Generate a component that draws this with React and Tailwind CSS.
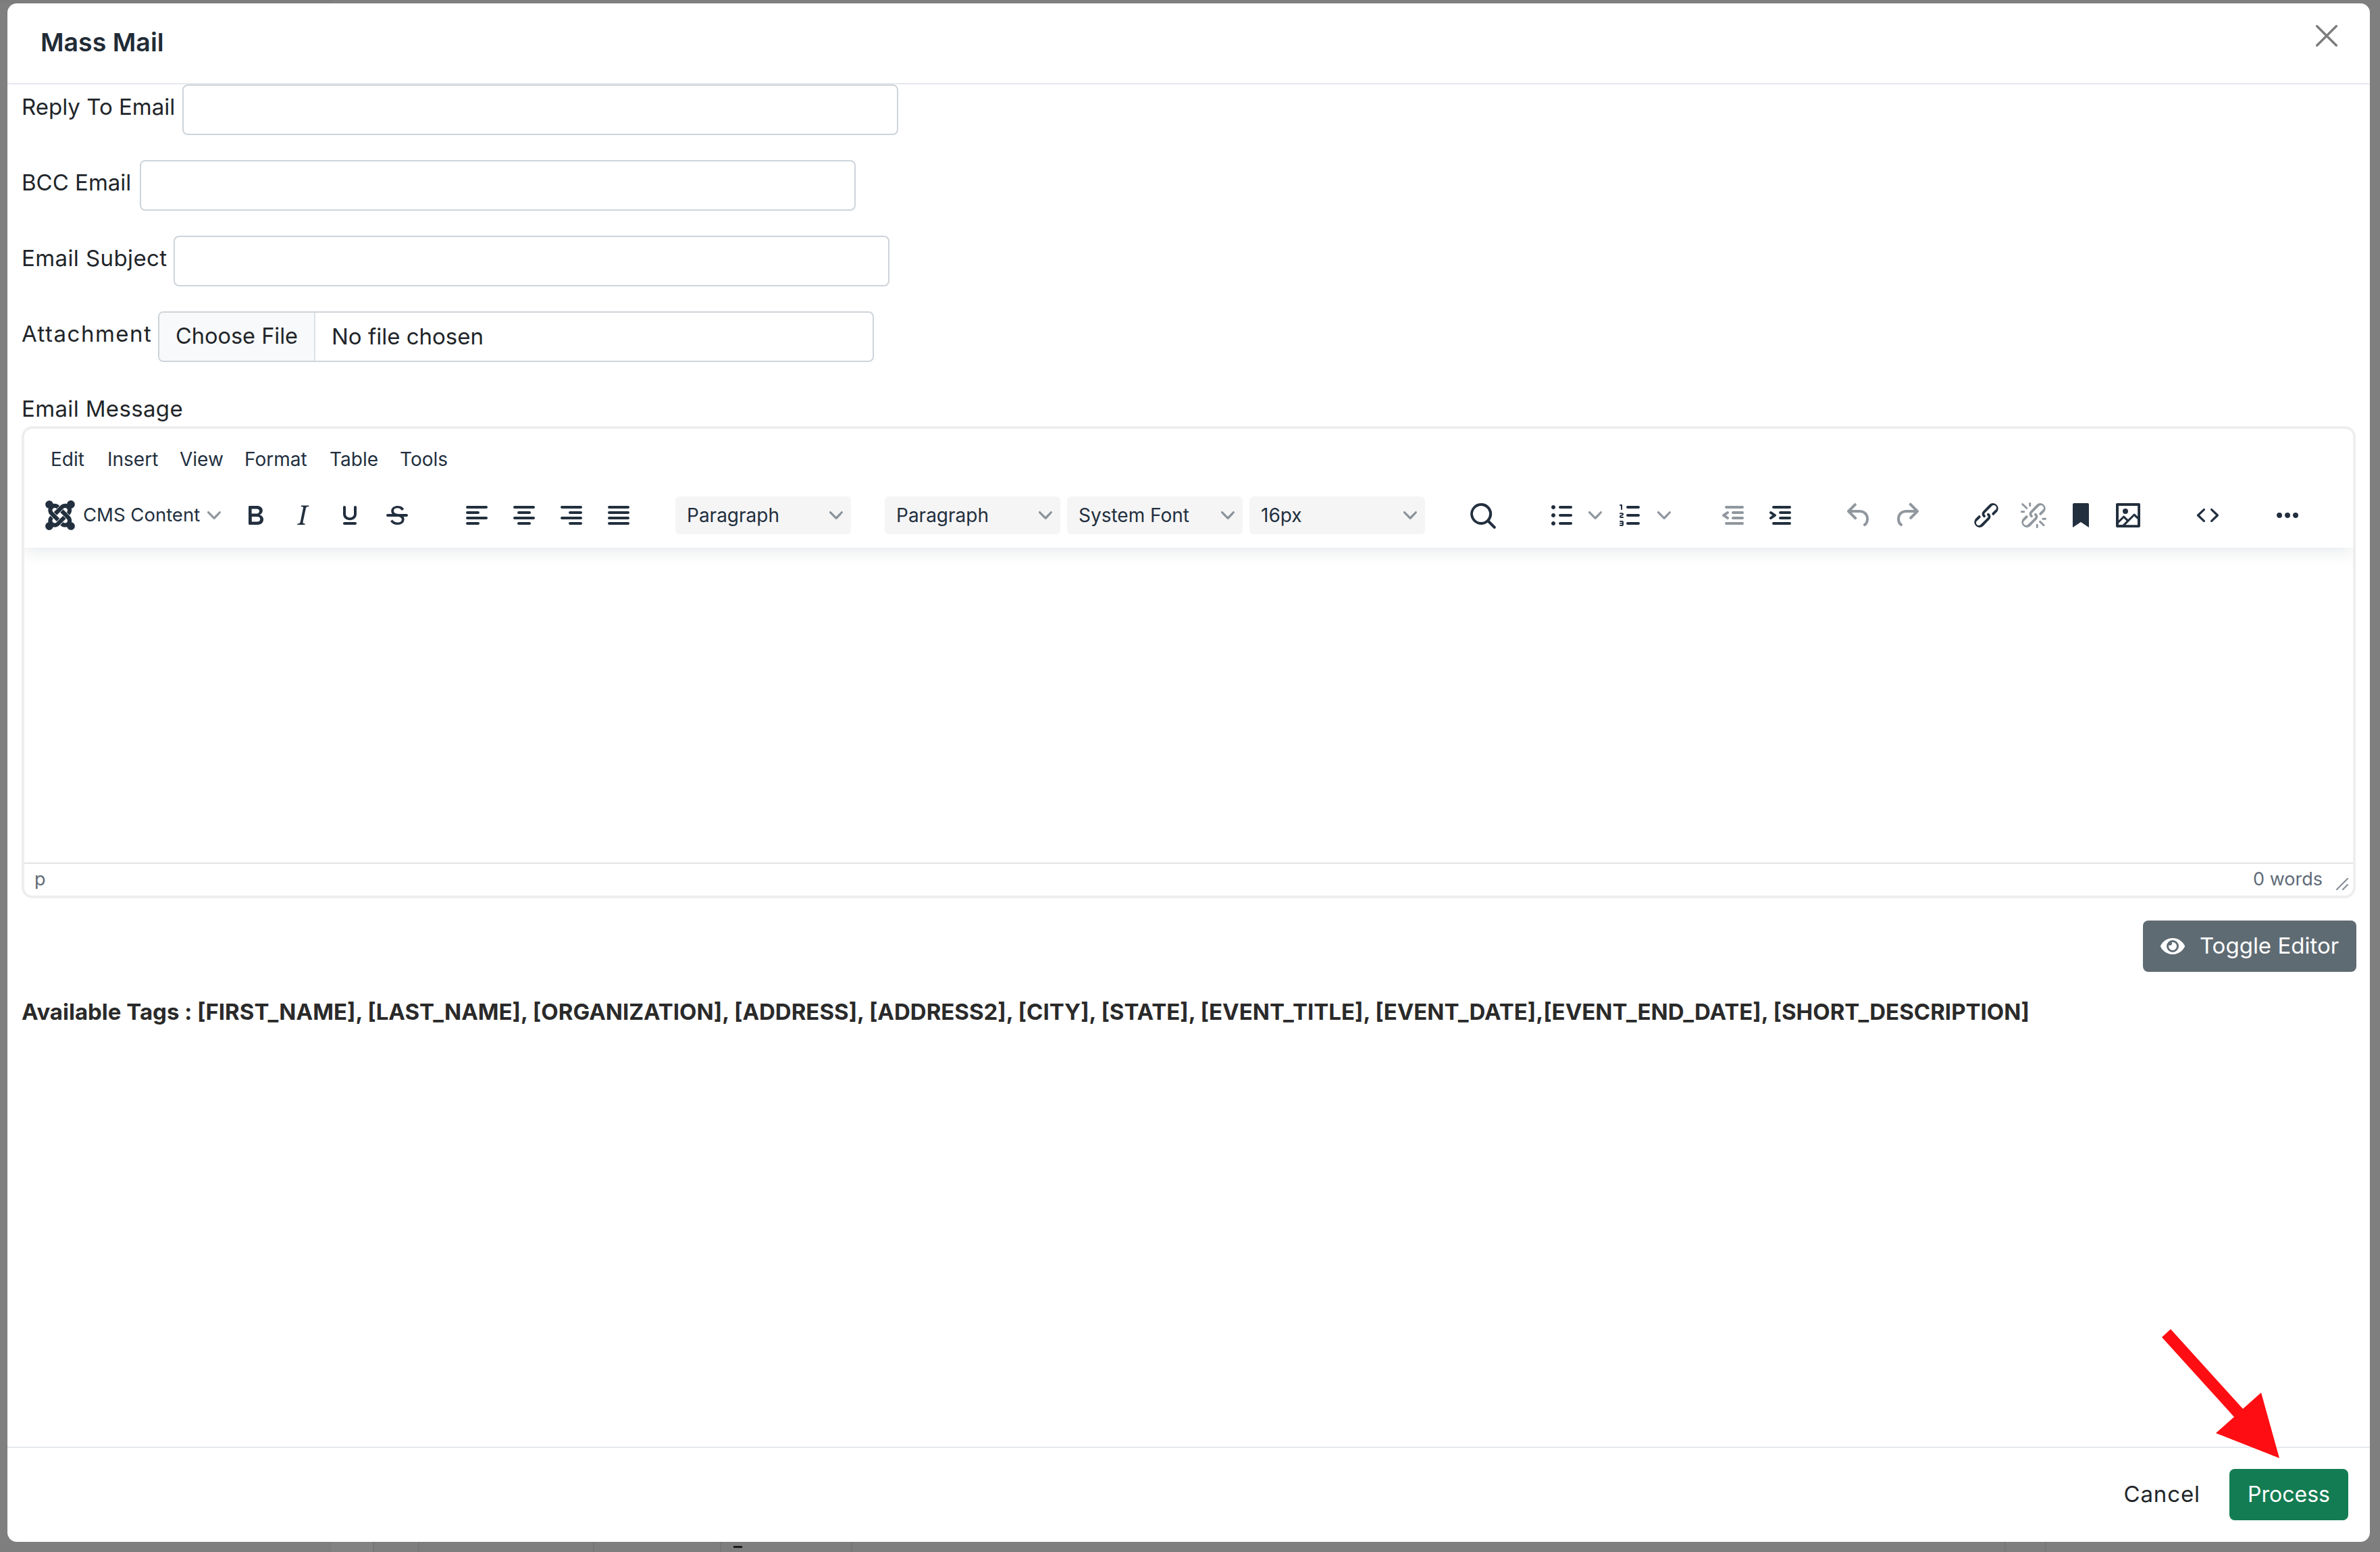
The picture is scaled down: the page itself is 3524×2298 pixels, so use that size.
import React from "react";
import { FaJoomla, FaEye } from "react-icons/fa";

const P = {
  bold: "M7.8 19c-.3 0-.5 0-.6-.2l-.2-.5V5.7c0-.2 0-.4.2-.5l.6-.2h5c1.5 0 2.7.3 3.5 1 .7.6 1.1 1.4 1.1 2.5a3 3 0 0 1-.6 1.9c-.4.6-1 1-1.6 1.2.4.1.9.3 1.3.6s.8.7 1 1.2c.4.4.5 1 .5 1.6 0 1.3-.4 2.3-1.3 3-.8.7-2.1 1-3.8 1H7.8zm5-8.3c.6 0 1.2-.1 1.6-.5.4-.3.6-.7.6-1.3 0-1.1-.8-1.7-2.3-1.7H9.3v3.5h3.4zm.5 6c.7 0 1.3-.1 1.7-.4.4-.4.6-.9.6-1.5s-.2-1-.7-1.4c-.4-.3-1-.4-2-.4H9.4v3.8h4z",
  italic: "M16.7 4.7l-.1.9h-.3c-.6 0-1 0-1.4.3-.3.3-.4.6-.5 1.1l-2.1 9.8v.6c0 .5.4.8 1.4.8h.2l-.2.8H8l.2-.8h.2c1.1 0 1.8-.5 2-1.5l2-9.8.1-.5c0-.6-.4-.8-1.4-.8h-.3l.2-.9h5.8z",
  underline: "M16 5c.6 0 1 .4 1 1v5c0 2.8-2.2 4.6-5 4.6S7 13.8 7 11V6c0-.6.4-1 1-1s1 .4 1 1v5c0 1.7 1.3 2.7 3 2.7s3-1 3-2.7V6c0-.6.4-1 1-1zM8 17h8c.6 0 1 .4 1 1s-.4 1-1 1H8c-.6 0-1-.4-1-1s.4-1 1-1z",
  strike: "M15.6 8.5c-.5-.7-1-1.1-1.3-1.3-.6-.4-1.3-.6-2-.6-2.7 0-2.8 1.7-2.8 2.1 0 1.6 1.8 2 3.2 2.3 4.4.9 4.6 2.8 4.6 3.9 0 1.4-.7 4.1-5 4.1A6.2 6.2 0 0 1 7 16.4l1.5-1.1c.4.6 1.6 2 3.7 2 1.6 0 2.5-.4 3-1.2.4-.8.3-2-.8-2.6-.7-.4-1.6-.7-2.9-1-1-.2-3.9-.8-3.9-3.6C7.6 6 10.3 5 12.4 5c2.9 0 4.2 1.6 4.7 2.4l-1.5 1.1zM5 11h14a1 1 0 0 1 0 2H5a1 1 0 0 1 0-2z",
  alignLeft: "M5 5h14c.6 0 1 .4 1 1s-.4 1-1 1H5a1 1 0 1 1 0-2zm0 4h8c.6 0 1 .4 1 1s-.4 1-1 1H5a1 1 0 1 1 0-2zm0 8h8c.6 0 1 .4 1 1s-.4 1-1 1H5a1 1 0 0 1 0-2zm0-4h14c.6 0 1 .4 1 1s-.4 1-1 1H5a1 1 0 0 1 0-2z",
  alignCenter: "M5 5h14c.6 0 1 .4 1 1s-.4 1-1 1H5a1 1 0 1 1 0-2zm3 4h8c.6 0 1 .4 1 1s-.4 1-1 1H8a1 1 0 1 1 0-2zm0 8h8c.6 0 1 .4 1 1s-.4 1-1 1H8a1 1 0 0 1 0-2zm-3-4h14c.6 0 1 .4 1 1s-.4 1-1 1H5a1 1 0 0 1 0-2z",
  alignRight: "M5 5h14c.6 0 1 .4 1 1s-.4 1-1 1H5a1 1 0 1 1 0-2zm6 4h8c.6 0 1 .4 1 1s-.4 1-1 1h-8a1 1 0 0 1 0-2zm0 8h8c.6 0 1 .4 1 1s-.4 1-1 1h-8a1 1 0 0 1 0-2zm-6-4h14c.6 0 1 .4 1 1s-.4 1-1 1H5a1 1 0 0 1 0-2z",
  justify: "M5 5h14c.6 0 1 .4 1 1s-.4 1-1 1H5a1 1 0 1 1 0-2zm0 4h14c.6 0 1 .4 1 1s-.4 1-1 1H5a1 1 0 1 1 0-2zm0 4h14c.6 0 1 .4 1 1s-.4 1-1 1H5a1 1 0 0 1 0-2zm0 4h14c.6 0 1 .4 1 1s-.4 1-1 1H5a1 1 0 0 1 0-2z",
  search: "M16 17.3a8 8 0 1 1 1.4-1.4l4.3 4.4a1 1 0 0 1-1.4 1.4l-4.4-4.3zm-5-.3a6 6 0 1 0 0-12 6 6 0 0 0 0 12z",
  bullist: "M11 5h8c.6 0 1 .4 1 1s-.4 1-1 1h-8a1 1 0 0 1 0-2zm0 6h8c.6 0 1 .4 1 1s-.4 1-1 1h-8a1 1 0 0 1 0-2zm0 6h8c.6 0 1 .4 1 1s-.4 1-1 1h-8a1 1 0 0 1 0-2zM4.5 6c0-.4.1-.8.4-1 .3-.4.7-.5 1.1-.5s.8.1 1 .4c.4.3.5.7.5 1.1s-.1.8-.4 1c-.3.4-.7.5-1.1.5s-.8-.1-1-.4c-.4-.3-.5-.7-.5-1.1zm0 6c0-.4.1-.8.4-1 .3-.4.7-.5 1.1-.5s.8.1 1 .4c.4.3.5.7.5 1.1s-.1.8-.4 1c-.3.4-.7.5-1.1.5s-.8-.1-1-.4c-.4-.3-.5-.7-.5-1.1zm0 6c0-.4.1-.8.4-1 .3-.4.7-.5 1.1-.5s.8.1 1 .4c.4.3.5.7.5 1.1s-.1.8-.4 1c-.3.4-.7.5-1.1.5s-.8-.1-1-.4c-.4-.3-.5-.7-.5-1.1z",
  numlist: "M10 17h8c.6 0 1 .4 1 1s-.4 1-1 1h-8a1 1 0 0 1 0-2zm0-6h8c.6 0 1 .4 1 1s-.4 1-1 1h-8a1 1 0 0 1 0-2zm0-6h8c.6 0 1 .4 1 1s-.4 1-1 1h-8a1 1 0 1 1 0-2zM6 4v3.5c0 .3-.2.5-.5.5a.5.5 0 0 1-.5-.5V5h-.5a.5.5 0 0 1 0-1H6zm-1 8.8l.2.2h1.3c.3 0 .5.2.5.5s-.2.5-.5.5H4.9a1 1 0 0 1-.9-1V13c0-.4.3-.8.6-1l1.2-.4.2-.3a.2.2 0 0 0-.2-.2H4.5a.5.5 0 0 1-.5-.5c0-.3.2-.5.5-.5h1.6c.5 0 .9.4.9 1v.1c0 .4-.3.8-.6 1l-1.2.4-.2.3zM7 17v2c0 .6-.4 1-1 1H4.5a.5.5 0 0 1 0-1h1.2c.2 0 .3-.1.3-.3 0-.2-.1-.3-.3-.3H4.4a.4.4 0 1 1 0-.8h1.3c.2 0 .3-.1.3-.3 0-.2-.1-.3-.3-.3H4.5a.5.5 0 1 1 0-1H6c.6 0 1 .4 1 1z",
  outdent: "M7 5h12c.6 0 1 .4 1 1s-.4 1-1 1H7a1 1 0 1 1 0-2zm5 4h7c.6 0 1 .4 1 1s-.4 1-1 1h-7a1 1 0 0 1 0-2zm0 4h7c.6 0 1 .4 1 1s-.4 1-1 1h-7a1 1 0 0 1 0-2zm-5 4h12a1 1 0 0 1 0 2H7a1 1 0 0 1 0-2zm1.6-3.8a1 1 0 0 1-1.2 1.6l-3-2a1 1 0 0 1 0-1.6l3-2a1 1 0 0 1 1.2 1.6L6.8 12l1.8 1.2z",
  indent: "M7 5h12c.6 0 1 .4 1 1s-.4 1-1 1H7a1 1 0 1 1 0-2zm5 4h7c.6 0 1 .4 1 1s-.4 1-1 1h-7a1 1 0 0 1 0-2zm0 4h7c.6 0 1 .4 1 1s-.4 1-1 1h-7a1 1 0 0 1 0-2zm-5 4h12a1 1 0 0 1 0 2H7a1 1 0 0 1 0-2zm-2.6-3.8L6.2 12l-1.8-1.2a1 1 0 0 1 1.2-1.6l3 2a1 1 0 0 1 0 1.6l-3 2a1 1 0 1 1-1.2-1.6z",
  undo: "M6.4 8H12c3.7 0 6.2 2 6.8 5.1.6 2.7-.4 5.6-2.3 6.8a1 1 0 0 1-1-1.8c1.1-.6 1.8-2.7 1.4-4.6-.5-2.1-2.1-3.5-4.9-3.5H6.4l3.3 3.3a1 1 0 1 1-1.4 1.4l-5-5a1 1 0 0 1 0-1.4l5-5a1 1 0 0 1 1.4 1.4L6.4 8z",
  redo: "M17.6 10H12c-2.8 0-4.4 1.4-4.9 3.5-.4 2 .3 4 1.4 4.6a1 1 0 1 1-1 1.8c-2-1.2-2.9-4.1-2.3-6.8.6-3 3-5.1 6.8-5.1h5.6l-3.3-3.3a1 1 0 1 1 1.4-1.4l5 5a1 1 0 0 1 0 1.4l-5 5a1 1 0 0 1-1.4-1.4l3.3-3.3z",
  link: "M6.2 12.3a1 1 0 0 1 1.4 1.4l-2 2a2 2 0 1 0 2.6 2.8l4.8-4.8a1 1 0 0 0 0-1.4 1 1 0 1 1 1.4-1.3 2.9 2.9 0 0 1 0 4L9.6 20a3.9 3.9 0 0 1-5.5-5.5l2-2zm11.6-.6a1 1 0 0 1-1.4-1.4l2-2a2 2 0 1 0-2.6-2.8L11 10.3a1 1 0 0 0 0 1.4 1 1 0 1 1-1.4 1.3 2.9 2.9 0 0 1 0-4L14.4 4a3.9 3.9 0 0 1 5.5 5.5l-2 2z",
  unlink: "M6.2 12.3a1 1 0 0 1 1.4 1.4l-2.1 2a2 2 0 1 0 2.7 2.8l4.8-4.8a1 1 0 0 0 0-1.4 1 1 0 1 1 1.4-1.3 2.9 2.9 0 0 1 0 4L9.6 20a3.9 3.9 0 0 1-5.5-5.5l2-2zm11.6-.6a1 1 0 0 1-1.4-1.4l2.1-2a2 2 0 1 0-2.7-2.8L11 10.3a1 1 0 0 0 0 1.4A1 1 0 1 1 9.6 13a2.9 2.9 0 0 1 0-4L14.4 4a3.9 3.9 0 0 1 5.5 5.5l-2 2zM7.6 6.3a.8.8 0 0 1-1 1.1L3.3 4.2a.7.7 0 1 1 1-1l3.2 3.1zM5.1 8.6a.8.8 0 0 1 0 1.5H3a.8.8 0 0 1 0-1.5H5zm5-3.5a.8.8 0 0 1-1.5 0V3a.8.8 0 0 1 1.5 0V5zm6 11.8a.8.8 0 0 1 1-1l3.2 3.2a.8.8 0 0 1-1 1L16 17zm-2.2 2a.8.8 0 0 1 1.5 0V21a.8.8 0 0 1-1.5 0V19zm5-3.5a.7.7 0 1 1 0-1.5H21a.8.8 0 0 1 0 1.5H19z",
  bookmark: "M6 4v17l6-4 6 4V4c0-.6-.4-1-1-1H7a1 1 0 0 0-1 1z",
  image: "M5 15.7l3.3-3.2c.3-.3.7-.3 1 0L12 15l4.1-4c.3-.4.8-.4 1 0l2 1.9V5H5v10.7zM5 18V19h3l2.8-2.9-2-2L5 17.9zm14-3l-2.5-2.4-6.4 6.5H19v-4zM4 3h16c.6 0 1 .4 1 1v16c0 .6-.4 1-1 1H4a1 1 0 0 1-1-1V4c0-.6.4-1 1-1zm6 8a2 2 0 1 0 0-4 2 2 0 0 0 0 4z",
  code: "M9.8 15.7c.3.3.3.8 0 1-.3.4-.9.4-1.2 0l-4.4-4.1a.8.8 0 0 1 0-1.2l4.4-4.2c.3-.3.9-.3 1.2 0 .3.3.3.8 0 1.1L6 12l3.8 3.7zm4.4 0c-.3.3-.3.8 0 1 .3.4.9.4 1.2 0l4.4-4.1c.3-.3.3-.9 0-1.2l-4.4-4.2a.8.8 0 0 0-1.2 0c-.3.3-.3.8 0 1.1L18 12l-3.8 3.7z",
  more: "M6 10a2 2 0 0 0-2 2c0 1.1.9 2 2 2a2 2 0 0 0 2-2 2 2 0 0 0-2-2zm12 0a2 2 0 0 0-2 2c0 1.1.9 2 2 2a2 2 0 0 0 2-2 2 2 0 0 0-2-2zm-6 0a2 2 0 0 0-2 2c0 1.1.9 2 2 2a2 2 0 0 0 2-2 2 2 0 0 0-2-2z",
};

function Tool({ d, off, className = "" }) {
  return (
    <span className={`flex h-[56px] w-[68px] shrink-0 items-center justify-center ${className}`}>
      <svg viewBox="0 0 24 24" className="h-12 w-12" fill="#222f3e" fillOpacity={off ? 0.5 : 1}>
        <path d={d} />
      </svg>
    </span>
  );
}

function Chevron({ className = "" }) {
  return (
    <svg viewBox="0 0 10 10" className={`h-5 w-5 shrink-0 ${className}`} fill="#222f3e" fillOpacity="0.5">
      <path d="M8.7 2.2c.3-.3.8-.3 1 0 .4.4.4.9 0 1.2L5.7 7.8c-.3.3-.9.3-1.2 0L.2 3.4a.8.8 0 0 1 0-1.2c.3-.3.8-.3 1.1 0L5 6l3.7-3.8z" />
    </svg>
  );
}

function Select({ label, className = "" }) {
  return (
    <span className={`flex h-[56px] w-[260px] shrink-0 items-center justify-between rounded-[6px] bg-[#f5f5f5] pl-[17px] pr-3 text-[28px] text-[#222f3e] ${className}`}>
      {label}
      <Chevron />
    </span>
  );
}

function Field({ label, labelW }) {
  return (
    <div className="mb-[37px] flex items-start gap-[11px]">
      <label className={`whitespace-nowrap pt-[9px] text-[33px] leading-[48px] text-[#212529] ${labelW}`}>{label}</label>
      <input className="h-[75px] w-[1060px] rounded-[8px] border-2 border-[#ced4da] bg-white" />
    </div>
  );
}

export default function App() {
  return (
    <div className="relative flex h-[2298px] w-[3524px] flex-col overflow-hidden bg-[#7f7f7f] font-['Inter'] text-[#212529]">
      <div className="flex h-[5px] shrink-0">
        <span className="w-[491px] bg-[#7c7c7c]" />
      </div>
      <div className="ml-[11px] flex h-[2278px] w-[3498px] shrink-0 flex-col rounded-[14px] bg-white">
        <header className="flex h-[120px] shrink-0 items-start justify-between border-b-2 border-[#e5e9ed] pl-[49px] pr-[48px]">
          <h1 className="mt-[35px] text-[37.5px] font-semibold leading-[46px] text-[#212b36]">Mass Mail</h1>
          <svg viewBox="0 0 32 32" className="mt-[32px] h-8 w-8" stroke="#7c7c7c" strokeWidth="3.4" strokeLinecap="round">
            <path d="M1.7 1.7 30.3 30.3M30.3 1.7 1.7 30.3" />
          </svg>
        </header>

        <main className="min-h-0 flex-1 px-[21px]">
          <Field label="Reply To Email" labelW="w-[227px]" />
          <Field label="BCC Email" labelW="w-[164px]" />
          <Field label="Email Subject" labelW="w-[214px] tracking-[0.4px]" />
          <div className="flex items-start gap-[11px]">
            <label className="w-[191px] whitespace-nowrap pt-[9px] text-[33px] leading-[48px] tracking-[1.5px]">Attachment</label>
            <div className="flex h-[75px] w-[1060px] items-stretch overflow-hidden rounded-[8px] border-2 border-[#ced4da] text-[33px]">
              <span className="flex w-[231px] items-center justify-center border-r-2 border-[#dee2e6] bg-[#f8f9fa] text-[32.5px]">Choose File</span>
              <span className="flex items-center pl-6">No file chosen</span>
            </div>
          </div>

          <div className="mt-[45px] text-[33px] leading-[48px] tracking-[0.35px]">Email Message</div>

          <div className="mt-[2px] flex h-[699px] flex-col overflow-hidden rounded-[16px] border-4 border-[#eeeeee]">
            <div className="relative z-10 h-[176px] shrink-0 bg-white shadow-[0_4px_24px_rgba(34,47,62,0.12)]">
              <nav className="flex h-[85px] items-center pl-[39px] pt-[4px] text-[28px] text-[#222f3e]">
                <span className="w-[84px]">Edit</span>
                <span className="w-[107px]">Insert</span>
                <span className="w-[96px]">View</span>
                <span className="w-[126px]">Format</span>
                <span className="w-[104px]">Table</span>
                <span>Tools</span>
              </nav>
              <div className="flex items-center pl-[28px] pt-[15px]">
                <FaJoomla className="h-[50px] w-[50px] shrink-0 text-[#222f3e]" />
                <span className="ml-[9px] w-[171px] shrink-0 whitespace-nowrap text-[27.5px] text-[#222f3e]">CMS Content</span>
                <Chevron className="ml-[13px]" />
                <Tool d={P.bold} className="ml-[17px]" />
                <Tool d={P.italic} className="ml-[2px]" />
                <Tool d={P.underline} className="ml-[2px]" />
                <Tool d={P.strike} className="ml-[2px]" />
                <Tool d={P.alignLeft} className="ml-[50px]" />
                <Tool d={P.alignCenter} className="ml-[2px]" />
                <Tool d={P.alignRight} className="ml-[2px]" />
                <Tool d={P.justify} className="ml-[2px]" />
                <Select label="Paragraph" className="ml-[50px]" />
                <Select label="Paragraph" className="ml-[50px]" />
                <Select label="System Font" className="ml-[10px]" />
                <Select label="16px" className="ml-[10px]" />
                <Tool d={P.search} className="ml-[51px]" />
                <Tool d={P.bullist} className="ml-[49px]" />
                <span className="flex w-[32px] shrink-0 justify-center"><Chevron /></span>
                <Tool d={P.numlist} className="ml-[2px]" />
                <span className="flex w-[32px] shrink-0 justify-center"><Chevron /></span>
                <Tool d={P.outdent} off className="ml-[52px]" />
                <Tool d={P.indent} className="ml-[2px]" />
                <Tool d={P.undo} off className="ml-[49px]" />
                <Tool d={P.redo} off className="ml-[2px]" />
                <Tool d={P.link} className="ml-[50px]" />
                <Tool d={P.unlink} off className="ml-[2px]" />
                <Tool d={P.bookmark} className="ml-[2px]" />
                <Tool d={P.image} className="ml-[2px]" />
                <Tool d={P.code} className="ml-[50px]" />
                <Tool d={P.more} className="ml-[50px]" />
              </div>
            </div>
            <div className="flex-1" />
            <div className="flex h-[49px] shrink-0 items-center justify-between border-t-2 border-[#e3e3e3] pl-[15px] pr-[6px] text-[27px] text-[#5f6b78]">
              <span>p</span>
              <span className="flex items-center">
                <span>0 words</span>
                <svg viewBox="0 0 20 20" className="ml-[19px] mt-[12px] h-5 w-5" stroke="#8d939b" strokeWidth="2.4" strokeLinecap="round">
                  <path d="M2 18 18 2M11 18l7-7" />
                </svg>
              </span>
            </div>
          </div>

          <div className="mt-[33px] flex justify-end">
            <button className="-mr-px flex h-[76px] w-[316px] items-center justify-center gap-[22px] rounded-[8px] bg-[#5f6b73] text-[33px] text-white">
              <FaEye className="h-[32px] w-[36px]" />
              Toggle Editor
            </button>
          </div>

          <p className="mt-[35px] whitespace-nowrap text-[33px] font-bold leading-[48px] text-[#2a2a2a]">
            Available Tags : [FIRST_NAME], [LAST_NAME], [ORGANIZATION], [ADDRESS], [ADDRESS2], [CITY], [STATE], [EVENT_TITLE], [EVENT_DATE],[EVENT_END_DATE], [SHORT_DESCRIPTION]
          </p>
        </main>

        <footer className="flex h-[141px] shrink-0 items-start justify-end gap-[43px] border-t-2 border-[#e5e9ed] pr-[32px] pt-[31px]">
          <button className="h-[76px] text-[33px] tracking-[0.9px] text-[#212529]">Cancel</button>
          <button className="h-[76px] w-[176px] rounded-[8px] bg-[#137c52] text-[32px] text-white">Process</button>
        </footer>
      </div>

      <div className="flex h-[15px] shrink-0 bg-[#7e7e7e]">
        <span className="ml-[491px] w-[61px] bg-[#828282]" />
        <span className="w-[67px] border-l-2 border-[#767676]" />
        <span className="w-[259px] border-l-2 border-[#767676]" />
        <span className="w-[188px] border-l-2 border-[#767676]" />
        <span className="relative w-[194px] border-l-2 border-[#767676]">
          <span className="absolute left-[18px] top-[6px] h-[3px] w-[13px] bg-[#1a1a1a]" />
        </span>
        <span className="w-[1708px] border-l-2 border-[#767676]" />
        <span className="w-[60px] border-l-2 border-[#767676]" />
        <span className="border-l-2 border-[#767676]" />
      </div>

      <svg className="pointer-events-none absolute left-0 top-0 h-[2298px] w-[3524px]" viewBox="0 0 3524 2298" fill="#fe0e13">
        <path d="M3214 1968 3201 1980 3308 2098 3281 2122 3375 2159 3348 2062 3321 2086Z" />
      </svg>
    </div>
  );
}
